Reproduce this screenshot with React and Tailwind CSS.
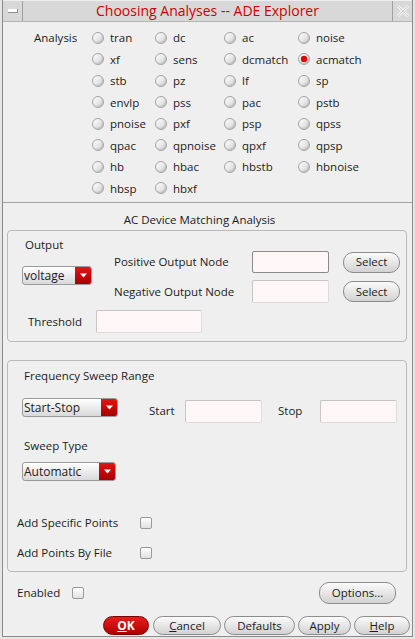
const analyses = [
  'tran', 'dc', 'ac', 'noise',
  'xf', 'sens', 'dcmatch', 'acmatch',
  'stb', 'pz', 'lf', 'sp',
  'envlp', 'pss', 'pac', 'pstb',
  'pnoise', 'pxf', 'psp', 'qpss',
  'qpac', 'qpnoise', 'qpxf', 'qpsp',
  'hb', 'hbac', 'hbstb', 'hbnoise',
  'hbsp', 'hbxf',
]

function Radio({ checked }) {
  return (
    <span className="w-[12px] h-[12px] rounded-full border border-[#a4a4a4] bg-linear-to-br from-white to-[#d2d2d2] shadow-[inset_-1px_-1px_1px_rgba(0,0,0,0.12)] flex items-center justify-center flex-shrink-0">
      {checked && <span className="w-[6px] h-[6px] rounded-full bg-[#e00000] shadow-[0_0_1px_#800]" />}
    </span>
  )
}

function Check() {
  return (
    <span className="w-[12px] h-[12px] rounded-[2px] border border-[#9a9a9a] bg-linear-to-b from-white to-[#e0e0e0] flex-shrink-0" />
  )
}

function Dropdown({ label, w }) {
  return (
    <div className={`flex h-[19px] ${w} rounded-[3px] border border-[#9a9a9a] bg-linear-to-b from-white to-[#d9d9d9] overflow-hidden`}>
      <span className="flex-1 pl-[1px] leading-[17px] text-[12px]">{label}</span>
      <span className="w-[16px] bg-linear-to-b from-[#e31414] to-[#a80000] flex items-center justify-center">
        <svg width="7" height="5" viewBox="0 0 7 5">
          <path d="M0 0.5 L7 0.5 L3.5 4.5 Z" fill="#fff" />
        </svg>
      </span>
    </div>
  )
}

function Field({ w, h = 'h-[23px]', strong }) {
  return (
    <div className={`${w} ${h} rounded-[2px] bg-[#fff7f7] border ${strong ? 'border-[#8a8a8a]' : 'border-[#dcdcdc] border-t-[#c4c4c4] border-l-[#c4c4c4]'}`} />
  )
}

function Pill({ children, w, h = 'h-[21px]' }) {
  return (
    <button className={`${w} ${h} rounded-[10px] border border-[#8c8c8c] bg-linear-to-b from-[#fbfbfb] to-[#d2d2d2] text-[11.5px] text-[#1c1c1c] flex items-center justify-center leading-none`}>
      {children}
    </button>
  )
}

export default function App() {
  return (
    <div className="w-[415px] h-[639px] bg-[#e6e6e6] px-[2px] font-['Open_Sans',sans-serif] text-[#1c1c1c] text-[11.5px] overflow-hidden">
      <div className="h-[637px] bg-[#efefef] border-x border-b border-[#8a8a8a] flex flex-col">
        {/* title bar */}
        <div className="h-[21px] flex bg-[#d8d8d8] border-b border-[#b4b4b4] mt-[1px]">
          <div className="w-[20px] flex items-center justify-center border-r border-[#a0a0a0]">
            <span className="w-[10px] h-[4px] bg-white border-b border-r border-[#8e8e8e]" />
          </div>
          <div className="flex-1 flex items-center justify-center text-[14px] text-[#d00000] leading-none">
            Choosing Analyses -- ADE Explorer
          </div>
          <div className="w-[20px] flex items-center justify-center border-l border-[#a0a0a0]">
            <svg width="14" height="13" viewBox="0 0 14 13">
              <path d="M2 1 L12 11 M12 1 L2 11" stroke="#f4f4f4" strokeWidth="3" />
              <path d="M2 1 L12 11 M12 1 L2 11" stroke="#c6c6c6" strokeWidth="1" />
            </svg>
          </div>
        </div>

        {/* analysis radios */}
        <div className="flex pl-[31px] pt-[5px]">
          <div className="w-[58px] h-[21.5px] flex items-center">Analysis</div>
          <div className="grid grid-cols-[63px_69px_74px_1fr] auto-rows-[21.5px]">
            {analyses.map((a) => (
              <div key={a} className="flex items-center gap-[6px]">
                <Radio checked={a === 'acmatch'} />
                <span>{a}</span>
              </div>
            ))}
          </div>
        </div>

        <div className="mt-[3px] h-px bg-[#a2a2a2]" />

        <div className="mt-[9px] h-[16px] leading-[16px] text-center pr-[16px]">AC Device Matching Analysis</div>

        {/* output group */}
        <div className="mt-[2px] ml-[4px] mr-[5px] rounded-[4px] border border-[#bababa] pb-[8px]">
          <div className="flex">
            <div className="w-[106px] pl-[14px]">
              <div className="mt-[6px] pl-[3px] h-[16px] leading-[16px]">Output</div>
              <div className="mt-[13px]">
                <Dropdown label="voltage" w="w-[70px]" />
              </div>
            </div>
            <div className="flex-1 pt-[20px]">
              <div className="flex items-center h-[22px]">
                <span className="w-[138px]">Positive Output Node</span>
                <Field w="w-[77px]" h="h-[22px]" strong />
                <div className="ml-[14px]"><Pill w="w-[57px]">Select</Pill></div>
              </div>
              <div className="flex items-center h-[23px] mt-[7px]">
                <span className="w-[138px]">Negative Output Node</span>
                <Field w="w-[77px]" />
                <div className="ml-[14px]"><Pill w="w-[57px]">Select</Pill></div>
              </div>
            </div>
          </div>
          <div className="flex items-center h-[23px] mt-[7px] pl-[20px]">
            <span className="w-[68px]">Threshold</span>
            <Field w="w-[106px]" />
          </div>
        </div>

        {/* frequency group */}
        <div className="mt-[18px] ml-[4px] mr-[5px] rounded-[4px] border border-[#bababa] h-[212px]">
          <div className="mt-[7px] pl-[16px] h-[16px] leading-[16px]">Frequency Sweep Range</div>
          <div className="mt-[14px] pl-[14px] flex items-center h-[25px]">
            <div className="self-start"><Dropdown label="Start-Stop" w="w-[96px]" /></div>
            <span className="ml-[31px] w-[36px]">Start</span>
            <div className="self-end"><Field w="w-[77px]" /></div>
            <span className="ml-[16px] w-[42px]">Stop</span>
            <div className="self-end"><Field w="w-[77px]" /></div>
          </div>
          <div className="mt-[15px] pl-[16px] h-[16px] leading-[16px]">Sweep Type</div>
          <div className="mt-[8px] pl-[14px]">
            <Dropdown label="Automatic" w="w-[94px]" />
          </div>
          <div className="mt-[34px] pl-[9px] flex items-center h-[16px]">
            <span className="w-[123px]">Add Specific Points</span>
            <Check />
          </div>
          <div className="mt-[14px] pl-[9px] flex items-center h-[16px]">
            <span className="w-[123px]">Add Points By File</span>
            <Check />
          </div>
        </div>

        {/* enabled / options */}
        <div className="mt-[10px] h-[22px] flex items-center pl-[14px] pr-[16px]">
          <span className="w-[55px]">Enabled</span>
          <Check />
          <div className="ml-auto"><Pill w="w-[77px]" h="h-[22px]">Options...</Pill></div>
        </div>

        {/* bottom buttons */}
        <div className="mt-[12px] flex justify-end gap-[3px] pr-[2px]">
          <button className="w-[46px] h-[19px] rounded-[10px] border border-[#7a0000] bg-linear-to-b from-[#e81c1c] to-[#b00000] text-white font-bold text-[12px] flex items-center justify-center leading-none mr-[1px]">
            <span className="underline">O</span>K
          </button>
          <Pill w="w-[68px]" h="h-[19px]"><span className="underline">C</span>ancel</Pill>
          <Pill w="w-[71px]" h="h-[19px]">Defaults</Pill>
          <Pill w="w-[53px]" h="h-[19px]">Apply</Pill>
          <Pill w="w-[56px]" h="h-[19px]"><span className="underline">H</span>elp</Pill>
        </div>
      </div>
    </div>
  )
}
